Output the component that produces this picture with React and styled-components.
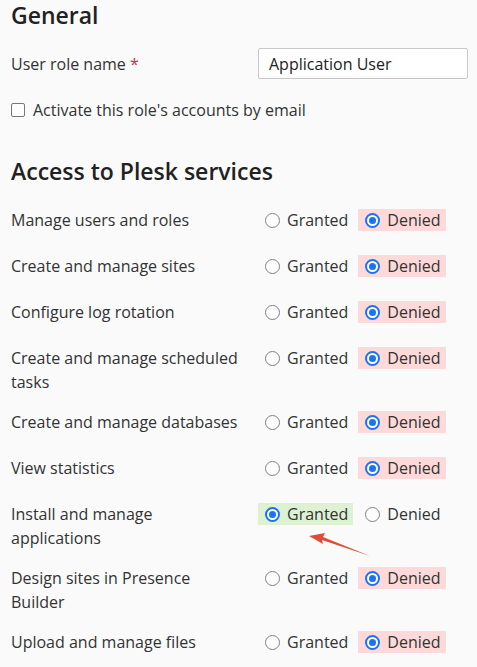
import React from 'react';
import styled, { createGlobalStyle } from 'styled-components';

const GlobalStyle = createGlobalStyle`
  html, body {
    margin: 0;
    padding: 0;
    background: #fafafa;
  }
  body {
    font-family: "Open Sans", "Noto Sans", sans-serif;
    color: #333;
  }
`;

const Page = styled.div`
  position: relative;
  padding: 0 8px 0 11px;
  height: 667px;
  overflow: hidden;
`;

const Title = styled.h2`
  margin: 0;
  font-size: 23px;
  font-weight: 600;
  line-height: 30px;
  color: #222;
`;

const FieldRow = styled.div`
  display: grid;
  grid-template-columns: 247px 210px;
  align-items: center;
  margin-top: 18px;
`;

const Label = styled.div`
  font-size: 16px;
  line-height: 24px;
  color: #333;
`;

const Required = styled.span`
  color: #d02d4b;
`;

const TextInput = styled.input`
  box-sizing: border-box;
  width: 210px;
  height: 31px;
  padding: 0 10px;
  border: 1px solid #c8c8c8;
  border-radius: 2px;
  background: #fff;
  font-family: inherit;
  font-size: 16px;
  color: #222;
  outline: none;
`;

const CheckRow = styled.label`
  display: flex;
  align-items: center;
  gap: 8px;
  margin-top: 19px;
  font-size: 16px;
  line-height: 24px;
  color: #333;
`;

const Box = styled.span`
  box-sizing: border-box;
  width: 14px;
  height: 14px;
  border: 1px solid #777;
  border-radius: 2px;
  background: #fff;
`;

const Section = styled.section`
  margin-top: 34px;
`;

const Rows = styled.div`
  display: flex;
  flex-direction: column;
  gap: 16px;
  margin-top: 22px;
`;

const AccessRow = styled.div`
  display: grid;
  grid-template-columns: 247px auto;
  align-items: start;
  min-height: 30px;
`;

const RowLabel = styled(Label)`
  padding-right: 14px;
`;

const Options = styled.div`
  display: flex;
  gap: 5px;
  margin-top: 1px;
`;

const Option = styled.label`
  display: flex;
  align-items: center;
  gap: 7px;
  height: 22px;
  padding: 0 5px 0 7px;
  font-size: 16px;
  color: #333;
  background: ${p => (p.$tone === 'green' ? '#dcf2d2' : p.$tone === 'red' ? '#fdd9d9' : 'transparent')};
`;

const Radio = styled.span`
  box-sizing: border-box;
  width: 15px;
  height: 15px;
  border-radius: 50%;
  background: #fff;
  border: ${p => (p.$checked ? '2px solid #1a73f5' : '1px solid #808080')};
  display: flex;
  align-items: center;
  justify-content: center;
  &::after {
    content: '';
    display: ${p => (p.$checked ? 'block' : 'none')};
    width: 7px;
    height: 7px;
    border-radius: 50%;
    background: #1a73f5;
  }
`;

const Arrow = styled.svg`
  position: absolute;
  left: 300px;
  top: 525px;
`;

const services = [
  { label: 'Manage users and roles', granted: false },
  { label: 'Create and manage sites', granted: false },
  { label: 'Configure log rotation', granted: false },
  { label: 'Create and manage scheduled tasks', granted: false },
  { label: 'Create and manage databases', granted: false },
  { label: 'View statistics', granted: false },
  { label: 'Install and manage applications', granted: true },
  { label: 'Design sites in Presence Builder', granted: false },
  { label: 'Upload and manage files', granted: false },
];

function ServiceRow({ label, granted }) {
  return (
    <AccessRow>
      <RowLabel>{label}</RowLabel>
      <Options>
        <Option $tone={granted ? 'green' : null}>
          <Radio $checked={granted} />
          Granted
        </Option>
        <Option $tone={granted ? null : 'red'}>
          <Radio $checked={!granted} />
          Denied
        </Option>
      </Options>
    </AccessRow>
  );
}

export default function App() {
  return (
    <Page>
      <GlobalStyle />
      <Title>General</Title>
      <FieldRow>
        <Label>User role name <Required>*</Required></Label>
        <TextInput defaultValue="Application User" />
      </FieldRow>
      <CheckRow>
        <Box />
        Activate this role's accounts by email
      </CheckRow>
      <Section>
        <Title>Access to Plesk services</Title>
        <Rows>
          {services.map(s => (
            <ServiceRow key={s.label} label={s.label} granted={s.granted} />
          ))}
        </Rows>
      </Section>
      <Arrow width="80" height="40" viewBox="0 0 80 40">
        <path d="M70 31 L22 15 L23 19 L9 11 L25 8 L23 12 Z" fill="#e04b35" />
      </Arrow>
    </Page>
  );
}
